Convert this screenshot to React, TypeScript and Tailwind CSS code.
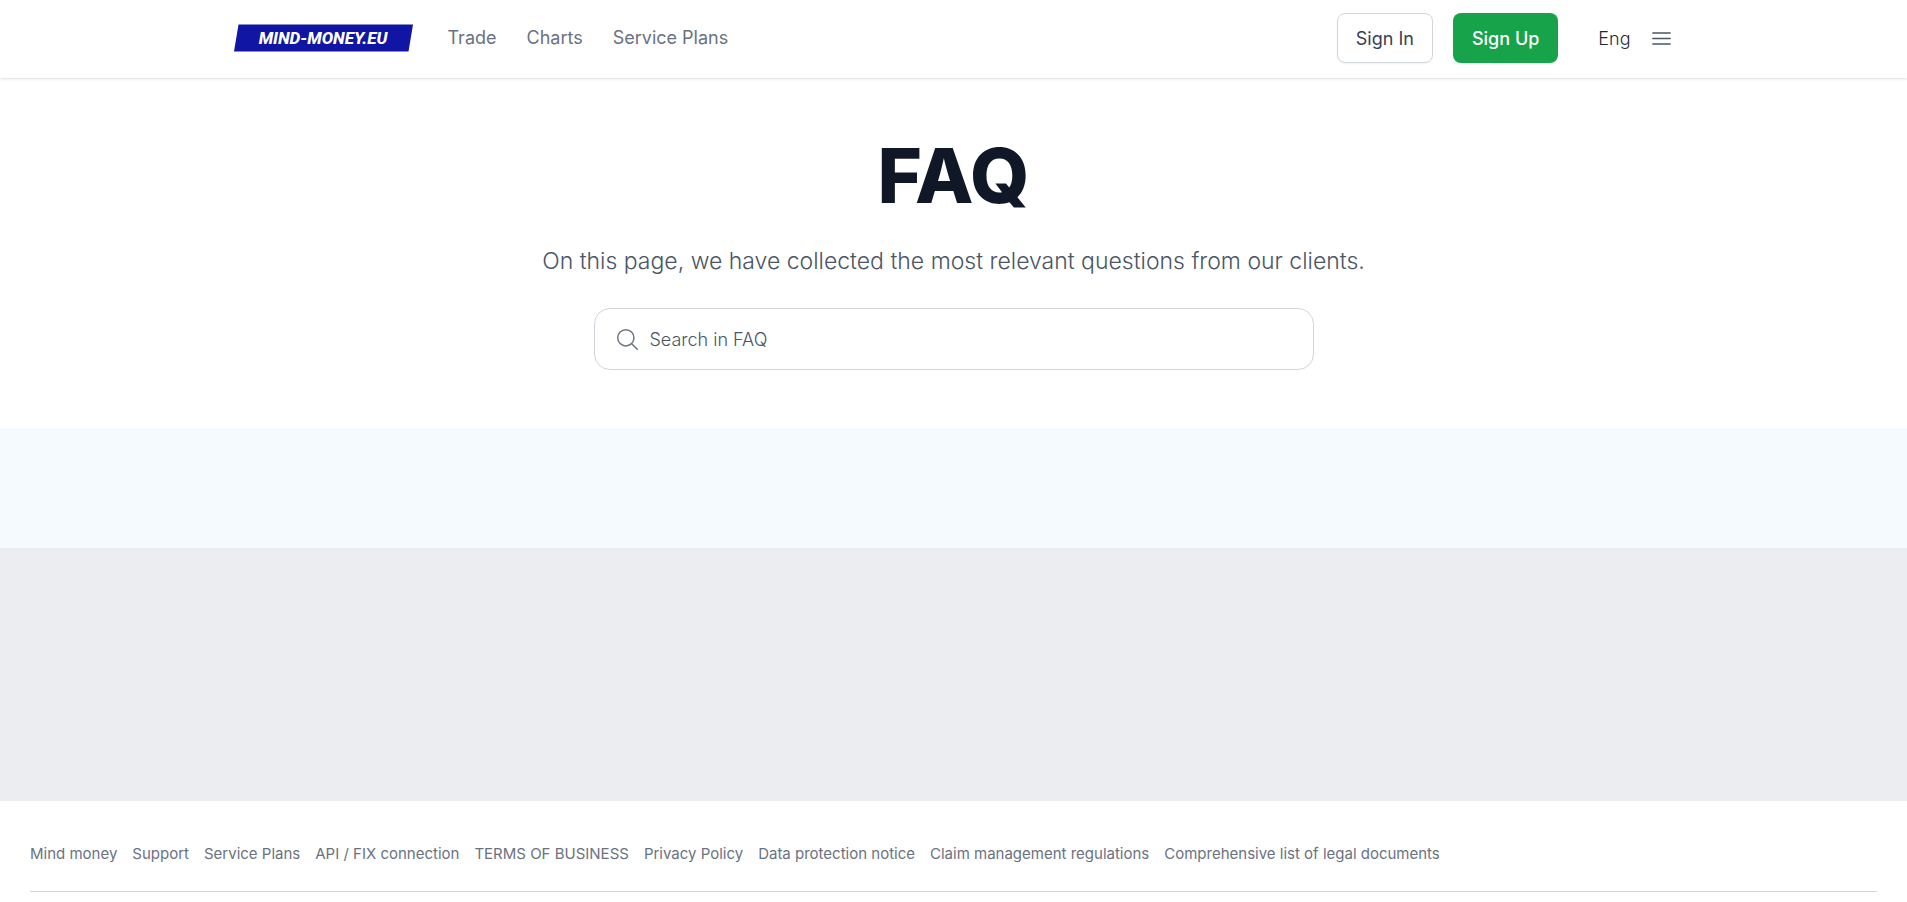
import React from "react";

const navLinks = ["Trade", "Charts", "Service Plans"];

const footerLinks = [
  "Mind money",
  "Support",
  "Service Plans",
  "API / FIX connection",
  "TERMS OF BUSINESS",
  "Privacy Policy",
  "Data protection notice",
  "Claim management regulations",
  "Comprehensive list of legal documents",
];

const Logo = () => (
  <svg width="180" height="28" viewBox="0 0 180 28" role="img" aria-label="MIND-MONEY.EU">
    <polygon points="4.5,0.5 179,0.5 174.5,27.5 0,27.5" fill="#1115a3" />
    <text
      x="89"
      y="20"
      textAnchor="middle"
      fill="#fff"
      fontSize="17"
      fontWeight="800"
      fontStyle="italic"
      fontFamily="Roboto, sans-serif"
    >
      MIND-MONEY.EU
    </text>
  </svg>
);

const Header = () => (
  <header className="bg-white shadow">
    <div className="mx-auto flex h-[78px] max-w-[1440px] items-start justify-between">
      <div className="flex h-[76px] items-center">
        <a href="#">
          <Logo />
        </a>
        <nav className="ml-[34px] flex gap-[30px]">
          {navLinks.map((link) => (
            <a key={link} href="#" className="text-[18px] leading-6 text-gray-500">
              {link}
            </a>
          ))}
        </nav>
      </div>
      <div className="flex h-[76px] items-center">
        <button
          type="button"
          className="h-[50px] rounded-lg border border-gray-300 px-[18px] text-[18px] text-gray-700 shadow-xs"
        >
          Sign In
        </button>
        <button
          type="button"
          className="ml-5 h-[50px] rounded-lg bg-[#16a34a] px-[19px] text-[18px] font-medium text-white shadow-xs"
        >
          Sign Up
        </button>
        <button type="button" className="ml-10 text-[18px] font-light text-gray-800">
          Eng
        </button>
        <button type="button" aria-label="Menu" className="ml-[18px] text-gray-600">
          <svg className="size-[25px]" fill="none" viewBox="0 0 24 24" stroke="currentColor" strokeWidth="1.5">
            <path strokeLinecap="round" d="M3.75 6.75h16.5M3.75 12h16.5M3.75 17.25h16.5" />
          </svg>
        </button>
      </div>
    </div>
  </header>
);

const Hero = () => (
  <section className="flex flex-col items-center px-5 pt-[59px] pb-[58px]">
    <h1 className="text-[76px] leading-[76px] font-extrabold text-gray-900">FAQ</h1>
    <p className="mt-8 text-center text-[23px] leading-8 font-light text-gray-600">
      On this page, we have collected the most relevant questions from our clients.
    </p>
    <label className="mt-[31px] flex h-[62px] w-full max-w-[720px] items-center gap-[10px] rounded-2xl border border-gray-300 px-5">
      <svg className="size-[25px] shrink-0 text-gray-500" fill="none" viewBox="0 0 24 24" stroke="currentColor" strokeWidth="1.4">
        <circle cx="10.4" cy="10.4" r="7.8" />
        <path strokeLinecap="round" d="m21.4 21.4-5.4-5.4" />
      </svg>
      <input
        type="text"
        aria-label="Search in FAQ"
        placeholder="Search in FAQ"
        className="min-w-0 flex-1 text-[18px] font-light text-gray-700 outline-none placeholder:text-gray-600"
      />
    </label>
  </section>
);

const Footer = () => (
  <footer className="bg-white px-[30px] pt-[41px]">
    <nav className="flex flex-wrap gap-x-[15px] border-b border-gray-300 pb-[25px]">
      {footerLinks.map((link) => (
        <a key={link} href="#" className="text-[15px] leading-6 text-gray-500">
          {link}
        </a>
      ))}
    </nav>
  </footer>
);

export default function App() {
  return (
    <div className="bg-white font-['Inter',sans-serif]">
      <Header />
      <main>
        <Hero />
        <div className="h-[120px] bg-[#f5faff]" />
        <div className="h-[253px] bg-[#ecedf1]" />
      </main>
      <Footer />
    </div>
  );
}
